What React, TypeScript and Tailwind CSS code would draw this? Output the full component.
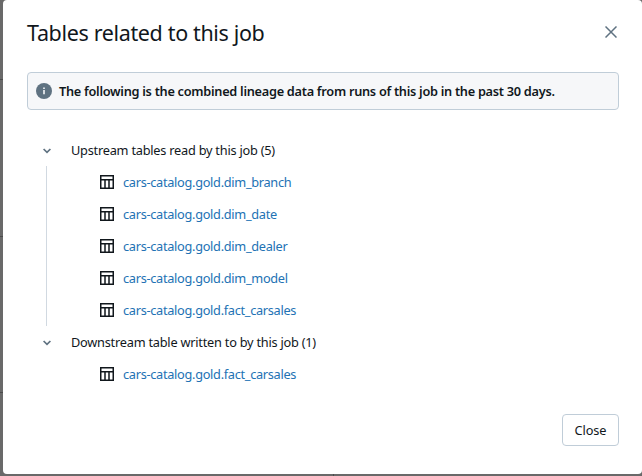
import React from "react";

function TableIcon() {
  return (
    <svg width="14" height="14" viewBox="0 0 14 14" className="block shrink-0" fill="none" stroke="#11171c" strokeWidth="1.5">
      <rect x="0.75" y="0.75" width="12.5" height="12.5" />
      <path d="M0.75 4.75H13.25M5 4.75V13M9 4.75V13" />
    </svg>
  );
}

function Chevron() {
  return (
    <svg width="8" height="6" viewBox="0 0 8 6" className="block shrink-0" fill="none" stroke="#5f7281" strokeWidth="1.7">
      <path d="M0.6 1L4 4.4L7.4 1" />
    </svg>
  );
}

function Group({ label }: { label: string }) {
  return (
    <div className="flex h-8 items-center">
      <span className="flex w-[44px] pl-4 pt-[2px]">
        <Chevron />
      </span>
      <span className="text-[12.75px] leading-5 tracking-[-0.23px]">{label}</span>
    </div>
  );
}

function TableLink({ name }: { name: string }) {
  return (
    <div className="flex h-8 items-center gap-[9px] pl-[53px]">
      <TableIcon />
      <a className="text-[12.75px] leading-5 tracking-[-0.3px] text-[#2272b4]">{name}</a>
    </div>
  );
}

const upstream = [
  "cars-catalog.gold.dim_branch",
  "cars-catalog.gold.dim_date",
  "cars-catalog.gold.dim_dealer",
  "cars-catalog.gold.dim_model",
  "cars-catalog.gold.fact_carsales",
];

export default function App() {
  return (
    <div className="relative h-[476px] w-[642px] overflow-hidden bg-[#696969] pb-[2px] pl-[3px] font-['Noto_Sans',sans-serif] whitespace-nowrap text-[#11171c]">
      <i className="absolute left-0 top-[79px] h-px w-[3px] bg-[#4c4c4c]" />
      <i className="absolute left-0 top-[236px] h-px w-[3px] bg-[#4c4c4c]" />
      <i className="absolute left-0 top-[392px] h-px w-[3px] bg-[#4c4c4c]" />
      <i className="absolute left-[333px] top-[474px] h-[2px] w-px bg-[#4c4c4c]" />
      <div className="flex h-[474px] flex-col rounded-[4px] bg-white pl-6 pr-[23px]">
        <div className="flex h-[72px] shrink-0 items-start justify-between">
          <h1 className="pt-[18px] text-[21.5px] leading-[30px] tracking-[-0.35px]">Tables related to this job</h1>
          <svg width="12" height="12" viewBox="0 0 12 12" className="mr-[2px] mt-[26px]" fill="none" stroke="#5f7281" strokeWidth="1.5">
            <path d="M0.5 0.5L11.5 11.5M11.5 0.5L0.5 11.5" />
          </svg>
        </div>
        <div className="flex h-[38px] shrink-0 items-center gap-[7px] rounded-[4px] border border-[#c0cdd8] bg-[#f6f7f9] pl-2">
          <svg width="16" height="16" viewBox="0 0 16 16" className="block shrink-0">
            <circle cx="8" cy="8" r="8" fill="#5f7281" />
            <path d="M7.2 4.4h1.6v1.5H7.2zM7.2 7h1.6v4.2H7.2z" fill="#f6f7f9" />
          </svg>
          <span className="text-[12.75px] font-semibold leading-5 tracking-[-0.28px]">
            The following is the combined lineage data from runs of this job in the past 30 days.
          </span>
        </div>
        <div className="mt-6">
          <Group label="Upstream tables read by this job (5)" />
          <div className="ml-[19px] border-l border-[#d1d9e1]">
            {upstream.map((name) => (
              <TableLink key={name} name={name} />
            ))}
          </div>
          <Group label="Downstream table written to by this job (1)" />
          <div className="ml-[20px]">
            <TableLink name="cars-catalog.gold.fact_carsales" />
          </div>
        </div>
        <div className="mt-6 flex justify-end">
          <button className="h-8 w-[57px] rounded-[4px] border border-[#c0cdd8] text-[12.75px] leading-5 tracking-[-0.1px]">Close</button>
        </div>
      </div>
    </div>
  );
}
